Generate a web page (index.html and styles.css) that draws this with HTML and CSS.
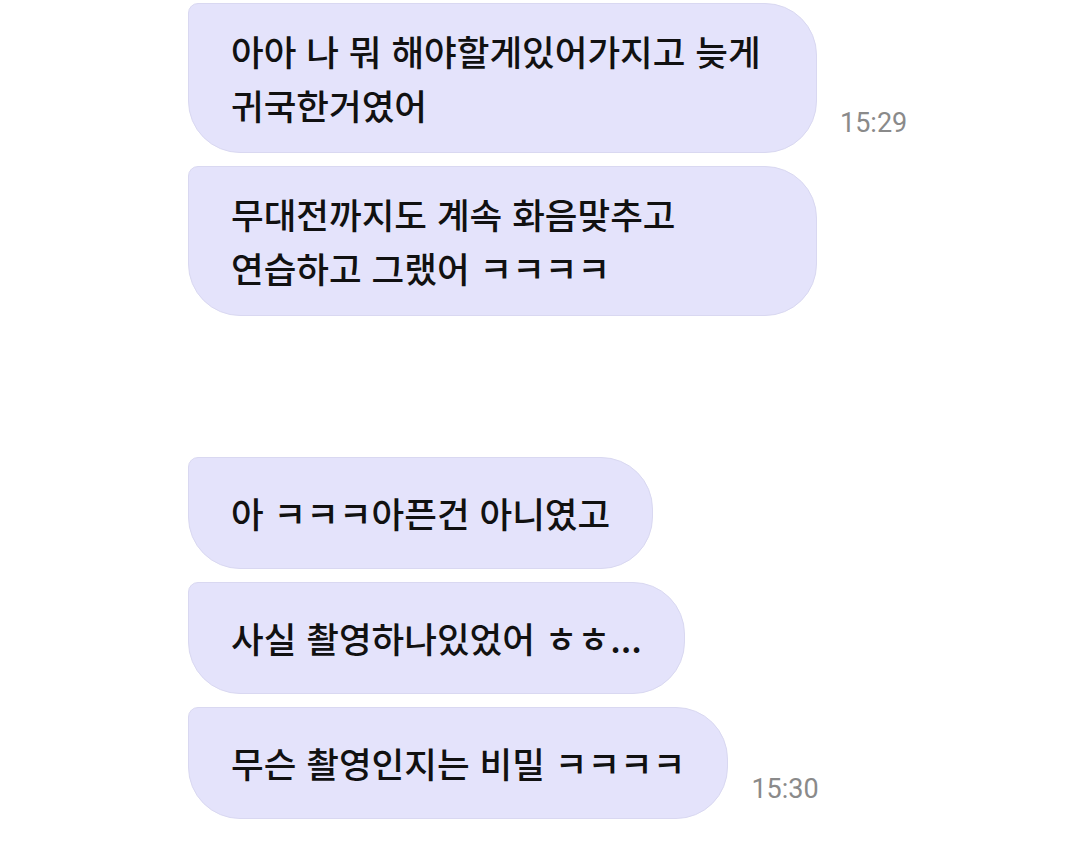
FILE: index.html
```html
<!DOCTYPE html>
<html lang="ko">
  <head>
    <meta charset="utf-8">
    <link rel="stylesheet" href="styles.css">
    <title>chat</title>
  </head>
  <body>
    <div class="chat">
      <div class="group">
        <div class="row">
          <div class="bubble">아아 나 뭐 해야할게있어가지고 늦게 귀국한거였어</div>
          <span class="time">15:29</span>
        </div>
        <div class="row">
          <div class="bubble">무대전까지도 계속 화음맞추고 연습하고 그랬어 ㅋㅋㅋㅋ</div>
        </div>
      </div>
      <div class="group">
        <div class="row">
          <div class="bubble">아 ㅋㅋㅋ아픈건 아니였고</div>
        </div>
        <div class="row">
          <div class="bubble">사실 촬영하나있었어 ㅎㅎ...</div>
        </div>
        <div class="row">
          <div class="bubble">무슨 촬영인지는 비밀 ㅋㅋㅋㅋ</div>
          <span class="time">15:30</span>
        </div>
      </div>
    </div>
  </body>
</html>
```

FILE: styles.css
```css
body {
  margin: 0;
  background: #fff;
}
.chat {
  display: flex;
  flex-direction: column;
  gap: 141px;
  padding: 3px 0 0 188px;
}
.group {
  display: flex;
  flex-direction: column;
  gap: 13px;
}
.row {
  display: flex;
  align-items: flex-end;
}
.bubble {
  box-sizing: border-box;
  max-width: 629px;
  min-height: 112px;
  display: flex;
  align-items: center;
  padding: 20px 42px;
  background: #e4e3fb;
  border: 1px solid #d9d8f1;
  border-radius: 10px 52px 52px 52px;
  font-family: "Noto Sans CJK KR", "Noto Sans", sans-serif;
  font-size: 35.5px;
  font-weight: 500;
  line-height: 54px;
  color: #111;
  word-break: keep-all;
}
.time {
  margin: 0 0 16px 23px;
  font-family: Roboto, "Liberation Sans", sans-serif;
  font-size: 27px;
  line-height: 1;
  color: #8a8a8a;
}
```
